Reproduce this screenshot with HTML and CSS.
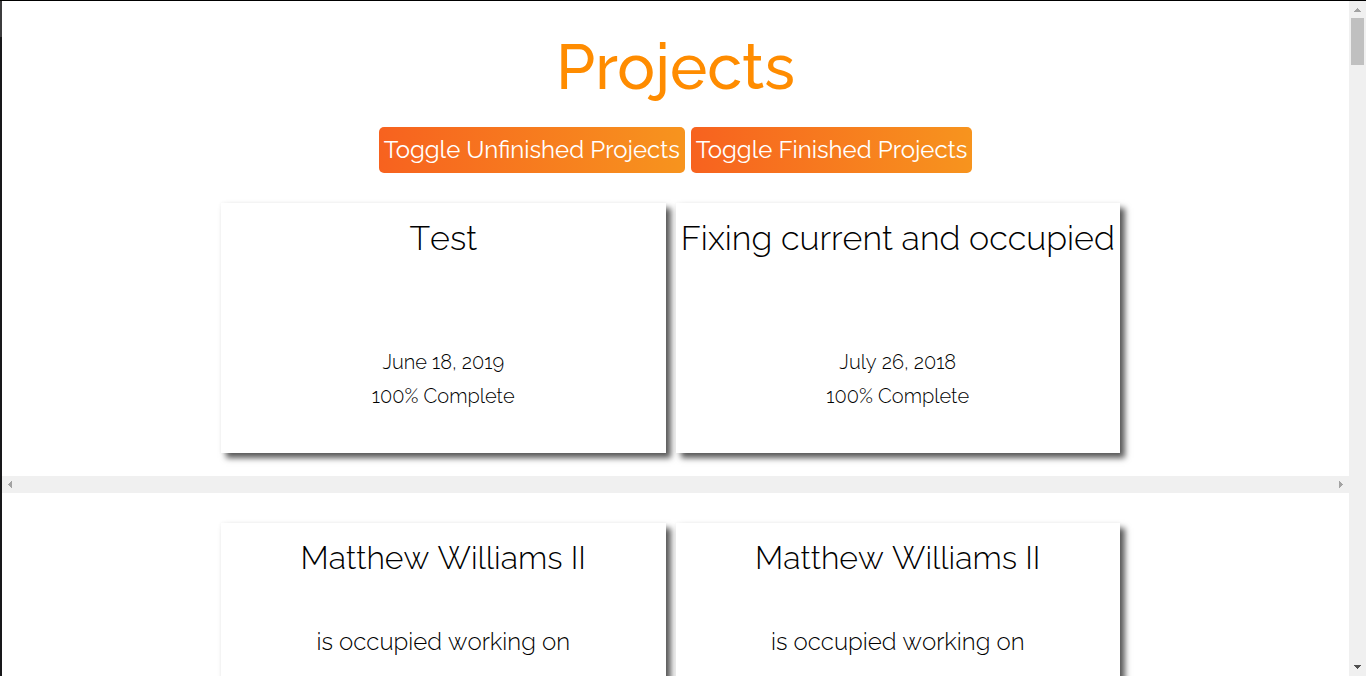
FILE: index.html
```html
<!DOCTYPE html>
<html lang="en">
<head>
<meta charset="utf-8">
<title>Projects</title>
<link rel="stylesheet" href="styles.css">
</head>
<body>
<div class="window">
  <div class="edge"></div>
  <main class="page">
    <h1 class="title">Projects</h1>
    <div class="actions">
      <button class="toggle" type="button">Toggle Unfinished Projects</button>
      <button class="toggle" type="button">Toggle Finished Projects</button>
    </div>
    <section class="cards">
      <article class="card">
        <h2 class="name">Test</h2>
        <p class="detail">June 18, 2019</p>
        <p class="detail">100% Complete</p>
      </article>
      <article class="card">
        <h2 class="name">Fixing current and occupied</h2>
        <p class="detail">July 26, 2018</p>
        <p class="detail">100% Complete</p>
      </article>
    </section>
    <div class="hscroll">
      <svg width="17" height="17" shape-rendering="crispEdges"><path d="M10 5v7L6 8.500z" fill="#a3a3a3"/></svg>
      <svg width="17" height="17" shape-rendering="crispEdges"><path d="M7 5v7l4-3.500z" fill="#a3a3a3"/></svg>
    </div>
    <section class="cards">
      <article class="card">
        <h2 class="name person">Matthew Williams II</h2>
        <p class="status">is occupied working on</p>
      </article>
      <article class="card">
        <h2 class="name person">Matthew Williams II</h2>
        <p class="status">is occupied working on</p>
      </article>
    </section>
  </main>
  <div class="vscroll">
    <svg width="17" height="17" shape-rendering="crispEdges"><path d="M5 11h7L8.500 7z" fill="#a3a3a3"/></svg>
    <div class="thumb"></div>
    <svg class="down" width="17" height="17" shape-rendering="crispEdges"><path d="M5 6h7L8.500 10z" fill="#505050"/></svg>
  </div>
</div>
</body>
</html>
```
FILE: styles.css
```css
* { box-sizing: border-box; }
body {
  margin: 0;
  background: #fff;
  color: #000;
  font-family: Raleway, Lato, "Open Sans", sans-serif;
  font-weight: 300;
}
.window {
  display: flex;
  height: 100vh;
  overflow: hidden;
  border-top: 1px solid #000;
}
.edge {
  width: 2px;
  background: linear-gradient(#3c3c3e 36px, #18181a 36px);
}
.page {
  flex: 1;
  min-width: 0;
  overflow: hidden;
  text-align: center;
}
.title {
  margin: 0;
  padding: 26px 0 20px;
  font-size: 63px;
  line-height: 80px;
  font-weight: 500;
  color: #ff8c00;
}
.actions {
  display: flex;
  justify-content: center;
  gap: 6px;
}
.toggle {
  height: 46px;
  padding: 0 5px 2px;
  border: 0;
  border-radius: 5px;
  background: linear-gradient(to right, #f7621f, #f7941e);
  color: #fff;
  font-family: inherit;
  font-size: 24px;
  font-weight: 400;
  white-space: nowrap;
}
.cards {
  display: flex;
  justify-content: center;
  padding: 30px 0 23px;
}
.card {
  width: 33%;
  height: 250px;
  margin-right: 10px;
  background: #fff;
  box-shadow: 5px 5px 6px rgba(0, 0, 0, .65), 0 0 4px rgba(0, 0, 0, .05);
  font-kerning: none;
  white-space: nowrap;
}
.name {
  margin: 0;
  height: 142px;
  padding-top: 14px;
  font-size: 34px;
  line-height: 42px;
  font-weight: 300;
}
.person {
  height: 102px;
  font-size: 32px;
}
.detail {
  margin: 0;
  font-size: 20px;
  line-height: 34px;
}
.status {
  margin: 0;
  font-size: 24px;
  line-height: 34px;
}
.hscroll {
  display: flex;
  justify-content: space-between;
  height: 17px;
  background: #f0f0f0;
}
.vscroll {
  display: flex;
  flex-direction: column;
  width: 17px;
  background: #f0f0f0;
}
.thumb {
  height: 47px;
  margin: 0 2px;
  background: #c0c0c0;
}
.down {
  margin-top: auto;
}
```
